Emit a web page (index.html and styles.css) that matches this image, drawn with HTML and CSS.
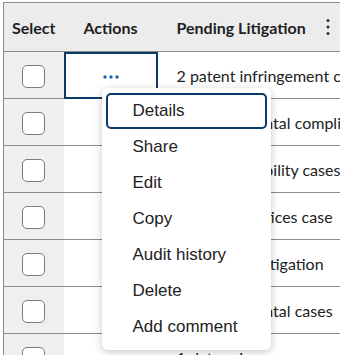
FILE: index.html
```html
<!DOCTYPE html>
<html lang="en">
<head>
  <meta charset="UTF-8">
  <title>Pending Litigation</title>
  <link rel="stylesheet" href="styles.css">
</head>
<body>
  <div class="grid-wrap">
    <table class="grid">
      <colgroup>
        <col class="col-select">
        <col class="col-actions">
        <col class="col-text">
      </colgroup>
      <thead>
        <tr>
          <th class="center">Select</th>
          <th class="center">Actions</th>
          <th>
            <div class="head-cell">
              <span>Pending Litigation</span>
              <svg class="kebab" width="6" height="18" viewBox="0 0 6 18">
                <circle cx="3" cy="2.5" r="1.5"/>
                <circle cx="3" cy="9" r="1.5"/>
                <circle cx="3" cy="15.5" r="1.5"/>
              </svg>
            </div>
          </th>
        </tr>
      </thead>
      <tbody>
        <tr>
          <td class="select"><span class="check"></span></td>
          <td class="actions focused">
            <span class="dots"><svg width="16" height="4" viewBox="0 0 16 4"><circle cx="2" cy="2" r="1.7"/><circle cx="8" cy="2" r="1.7"/><circle cx="14" cy="2" r="1.7"/></svg></span>
            <div class="menu">
              <div class="menu-item active">Details</div>
              <div class="menu-item">Share</div>
              <div class="menu-item">Edit</div>
              <div class="menu-item">Copy</div>
              <div class="menu-item">Audit history</div>
              <div class="menu-item">Delete</div>
              <div class="menu-item">Add comment</div>
            </div>
          </td>
          <td>2 patent infringement cases</td>
        </tr>
        <tr>
          <td class="select"><span class="check"></span></td>
          <td class="actions"><span class="dots"><svg width="16" height="4" viewBox="0 0 16 4"><circle cx="2" cy="2" r="1.7"/><circle cx="8" cy="2" r="1.7"/><circle cx="14" cy="2" r="1.7"/></svg></span></td>
          <td>1 environmental compliance review</td>
        </tr>
        <tr>
          <td class="select"><span class="check"></span></td>
          <td class="actions"><span class="dots"><svg width="16" height="4" viewBox="0 0 16 4"><circle cx="2" cy="2" r="1.7"/><circle cx="8" cy="2" r="1.7"/><circle cx="14" cy="2" r="1.7"/></svg></span></td>
          <td>3 product liability cases</td>
        </tr>
        <tr>
          <td class="select"><span class="check"></span></td>
          <td class="actions"><span class="dots"><svg width="16" height="4" viewBox="0 0 16 4"><circle cx="2" cy="2" r="1.7"/><circle cx="8" cy="2" r="1.7"/><circle cx="14" cy="2" r="1.7"/></svg></span></td>
          <td>1 unfair practices case</td>
        </tr>
        <tr>
          <td class="select"><span class="check"></span></td>
          <td class="actions"><span class="dots"><svg width="16" height="4" viewBox="0 0 16 4"><circle cx="2" cy="2" r="1.7"/><circle cx="8" cy="2" r="1.7"/><circle cx="14" cy="2" r="1.7"/></svg></span></td>
          <td>2 corporate litigation</td>
        </tr>
        <tr>
          <td class="select"><span class="check"></span></td>
          <td class="actions"><span class="dots"><svg width="16" height="4" viewBox="0 0 16 4"><circle cx="2" cy="2" r="1.7"/><circle cx="8" cy="2" r="1.7"/><circle cx="14" cy="2" r="1.7"/></svg></span></td>
          <td>2 environmental cases</td>
        </tr>
        <tr>
          <td class="select"><span class="check"></span></td>
          <td class="actions"><span class="dots"><svg width="16" height="4" viewBox="0 0 16 4"><circle cx="2" cy="2" r="1.7"/><circle cx="8" cy="2" r="1.7"/><circle cx="14" cy="2" r="1.7"/></svg></span></td>
          <td>1 data privacy case</td>
        </tr>
      </tbody>
    </table>
  </div>
</body>
</html>
```

FILE: styles.css
```css
html, body {
  margin: 0;
  overflow: hidden;
  background: #fff;
}
body {
  font-family: Lato, "Noto Sans", sans-serif;
  font-size: 16px;
  color: #222;
}
.grid-wrap {
  padding: 2px 0 0 3px;
}
.grid {
  border-collapse: collapse;
  table-layout: fixed;
  width: 460px;
  border-top: 1px solid #8c8c8c;
  border-left: 1px solid #8c8c8c;
}
.col-select { width: 60px; }
.col-actions { width: 94px; }
.col-text { width: 306px; }
.grid th {
  height: 48px;
  padding: 0 0 0 19px;
  background: #ececec;
  text-align: left;
  font-weight: bold;
  color: #1f1f1f;
  border-bottom: 1px solid #8c8c8c;
  white-space: nowrap;
}
.grid th.center {
  padding: 0;
  text-align: center;
}
.head-cell {
  display: flex;
  align-items: center;
  gap: 19px;
}
.kebab {
  fill: #1c3553;
}
.grid td {
  height: 46px;
  padding: 0 0 0 19px;
  border-bottom: 1px solid #8c8c8c;
  white-space: nowrap;
}
.grid td.select {
  padding: 0;
  background: #efefef;
  text-align: center;
}
.check {
  display: inline-block;
  width: 21px;
  height: 21px;
  margin-top: 3px;
  vertical-align: middle;
  background: #fff;
  border: 1px solid #7c7c7c;
  border-radius: 5px;
}
.grid td.actions {
  position: relative;
  padding: 0;
  text-align: center;
}
.grid td.focused {
  outline: 2px solid #0c3a66;
  outline-offset: -2px;
}
.dots svg {
  display: inline-block;
  vertical-align: middle;
  fill: #1f63aa;
}
.menu {
  position: absolute;
  left: 38px;
  top: 36px;
  z-index: 2;
  width: 161px;
  padding: 5px 4px;
  background: #fff;
  border-radius: 6px;
  box-shadow: 0 2px 8px rgba(0,0,0,0.22);
  text-align: left;
  font-family: "Liberation Sans", Arial, sans-serif;
  font-size: 17px;
  color: #222;
}
.menu-item {
  height: 32px;
  line-height: 32px;
  padding: 0 0 0 25px;
  border: 2px solid transparent;
  border-radius: 5px;
}
.menu-item.active {
  border-color: #0c3a66;
}
```
